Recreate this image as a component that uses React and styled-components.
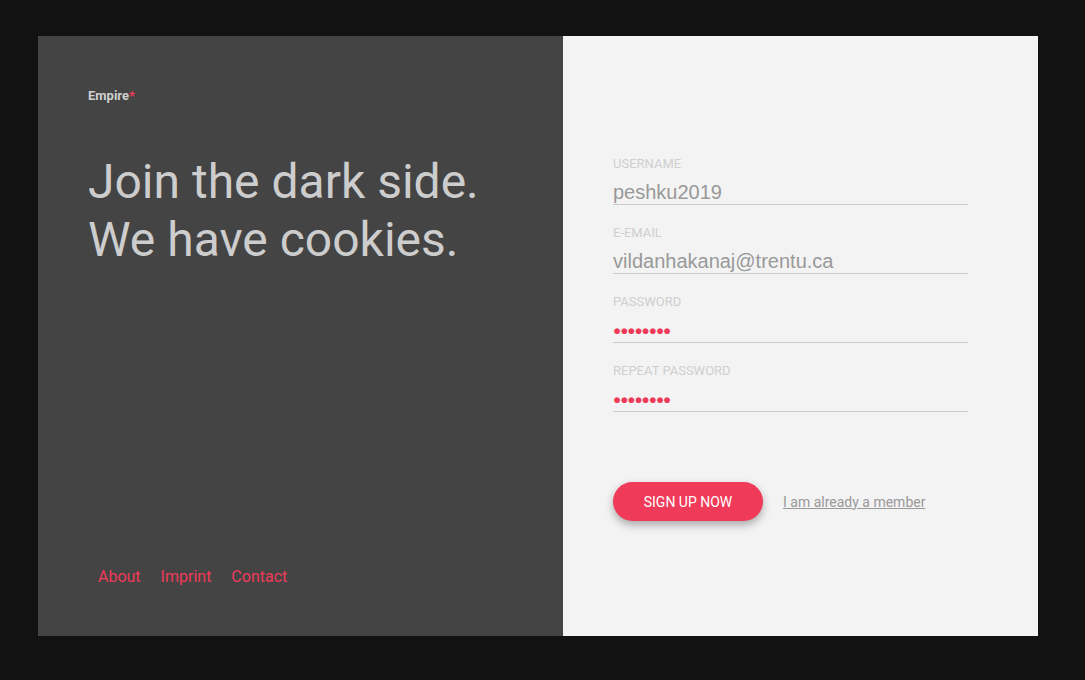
import React from 'react'
import styled, { createGlobalStyle } from 'styled-components'

const Global = createGlobalStyle`
  html, body { margin: 0; padding: 0; }
  body {
    background: #121212;
    font-family: Roboto, "Noto Sans", sans-serif;
  }
`

const Page = styled.div`
  width: 1085px;
  height: 680px;
  padding: 36px 0 0 38px;
  box-sizing: border-box;
`

const Card = styled.div`
  display: flex;
  width: 1000px;
  height: 600px;
`

const Dark = styled.div`
  width: 525px;
  background: #444444;
  padding: 52px 50px 50px 50px;
  box-sizing: border-box;
  display: flex;
  flex-direction: column;
`

const Logo = styled.div`
  font-size: 13px;
  font-weight: 700;
  color: #cfcfcf;
  height: 18px;
  span { color: #f03a5a; }
`

const Heading = styled.h1`
  margin: 47px 0 0 0;
  font-size: 48px;
  line-height: 58px;
  font-weight: 400;
  color: #cdcdcd;
`

const Footer = styled.nav`
  margin-top: auto;
  display: flex;
`

const FootLink = styled.a`
  padding: 0 10px;
  font-size: 16px;
  color: #f03a5a;
  text-decoration: none;
  cursor: pointer;
`

const Light = styled.div`
  flex: 1;
  background: #f3f3f3;
  padding: 121px 70px 0 50px;
  box-sizing: border-box;
`

const Field = styled.div`
  display: flex;
  flex-direction: column;
  margin-bottom: 21px;
`

const Label = styled.label`
  font-size: 13px;
  color: #cfcfcf;
  line-height: 14px;
  text-transform: uppercase;
`

const Input = styled.div`
  margin-top: 4px;
  height: 30px;
  border-bottom: 1px solid #cccccc;
  font-family: "Liberation Sans", Arial, sans-serif;
  font-size: 20px;
  color: #999999;
  display: flex;
  align-items: flex-end;
  box-sizing: border-box;
`

const Dots = styled.span`
  color: #f03a5a;
  font-size: 13.5px;
  letter-spacing: -1px;
  padding-bottom: 4px;
`

const Actions = styled.div`
  display: flex;
  align-items: center;
  gap: 20px;
  margin-top: 70px;
`

const Button = styled.button`
  width: 150px;
  height: 39px;
  border: none;
  border-radius: 20px;
  background: #f03a5a;
  color: #fff;
  font-family: Roboto, sans-serif;
  font-size: 14px;
  text-transform: uppercase;
  box-shadow: 0 4px 8px rgba(0, 0, 0, 0.3);
  cursor: pointer;
`

const Member = styled.a`
  font-size: 14px;
  color: #999;
  text-decoration: underline;
  cursor: pointer;
`

const fields = [
  { label: 'Username', value: 'peshku2019' },
  { label: 'E-Email', value: 'vildanhakanaj@trentu.ca' },
  { label: 'Password', secret: true },
  { label: 'Repeat Password', secret: true },
]

const App = () => {
  return (
    <Page>
      <Global />
      <Card>
        <Dark>
          <Logo>Empire<span>*</span></Logo>
          <Heading>Join the dark side.<br />We have cookies.</Heading>
          <Footer>
            <FootLink>About</FootLink>
            <FootLink>Imprint</FootLink>
            <FootLink>Contact</FootLink>
          </Footer>
        </Dark>
        <Light>
          {fields.map(f => (
            <Field key={f.label}>
              <Label>{f.label}</Label>
              <Input>{f.secret ? <Dots>{'\u25CF'.repeat(8)}</Dots> : f.value}</Input>
            </Field>
          ))}
          <Actions>
            <Button>Sign up now</Button>
            <Member>I am already a member</Member>
          </Actions>
        </Light>
      </Card>
    </Page>
  )
}

export default App
